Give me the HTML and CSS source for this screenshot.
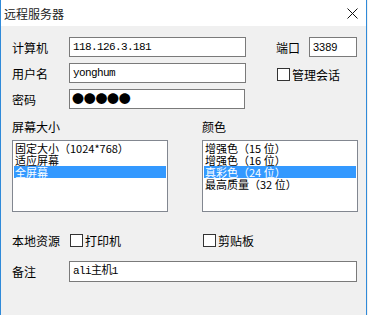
FILE: index.html
```html
<!doctype html>
<html lang="zh-CN">
  <head>
    <meta charset="UTF-8" />
    <title>远程服务器</title>
    <link rel="stylesheet" href="styles.css">
  </head>
  <body>
    <div class="window">
      <div class="titlebar">
        <span class="title">远程服务器</span>
        <svg class="close" width="11" height="11" viewBox="0 0 11 11">
          <path d="M0.5 0.5 L10.5 10.5 M10.5 0.5 L0.5 10.5" stroke="#111" stroke-width="1" fill="none" />
        </svg>
      </div>

      <div class="content">
        <!-- 连接信息 -->
        <div class="row">
          <label class="label">计算机</label>
          <div class="input mono wide">118.126.3.181</div>
          <label class="label short">端口</label>
          <div class="input port">3389</div>
        </div>
        <div class="row">
          <label class="label">用户名</label>
          <div class="input mono wide">yonghum</div>
          <span class="check side"><span class="box"></span>管理会话</span>
        </div>
        <div class="row">
          <label class="label">密码</label>
          <div class="input wide dots">●●●●●</div>
        </div>

        <!-- 屏幕与颜色 -->
        <div class="lists">
          <div class="list-group">
            <div class="list-title">屏幕大小</div>
            <ul class="listbox">
              <li>固定大小（1024*768）</li>
              <li>适应屏幕</li>
              <li class="selected">全屏幕</li>
            </ul>
          </div>
          <div class="list-group">
            <div class="list-title">颜色</div>
            <ul class="listbox">
              <li>增强色（15 位）</li>
              <li>增强色（16 位）</li>
              <li class="selected">真彩色（24 位）</li>
              <li>最高质量（32 位）</li>
            </ul>
          </div>
        </div>

        <!-- 本地资源 -->
        <div class="row resources">
          <label class="label res">本地资源</label>
          <span class="check printer"><span class="box"></span>打印机</span>
          <span class="check"><span class="box"></span>剪贴板</span>
        </div>
        <div class="row">
          <label class="label">备注</label>
          <div class="input mono note">ali主机1</div>
        </div>
      </div>
    </div>
  </body>
</html>
```

FILE: styles.css
```css
body {
  margin: 0;
  background: #f0f0f0;
  font-family: "Noto Sans CJK SC", "Noto Sans", sans-serif;
  font-size: 12px;
  color: #000;
}
.window {
  width: 365px;
  height: 315px;
  border-left: 1px solid #2f8ad9;
  border-right: 1px solid #2f8ad9;
  background: #f0f0f0;
  overflow: hidden;
}
.titlebar {
  height: 26px;
  background: #fff;
  display: flex;
  align-items: center;
  justify-content: space-between;
  padding: 0 8px 0 3px;
}
.title {
  font-size: 12px;
  color: #222;
}
.close {
  margin-top: 1px;
}
.content {
  padding: 11px 0 0 11px;
}
.row {
  display: flex;
  align-items: center;
  height: 20px;
  margin-bottom: 6px;
}
.label {
  width: 57px;
  flex: none;
}
.label.short {
  width: 33px;
  margin-left: 30px;
}
.input {
  height: 18px;
  line-height: 18px;
  border: 1px solid #7a7a7a;
  background: #fff;
  padding: 0 3px;
  box-sizing: content-box;
  white-space: nowrap;
  overflow: hidden;
  flex: none;
}
.mono {
  font-family: "Liberation Mono", "Noto Sans CJK SC", monospace;
  font-size: 11px;
  letter-spacing: -0.6px;
}
.wide {
  width: 169px;
}
.port {
  width: 40px;
  font-family: "Liberation Sans", sans-serif;
  font-size: 11px;
}
.dots {
  font-size: 12px;
  letter-spacing: -0.3px;
  padding-left: 2px;
}
.check {
  display: flex;
  align-items: center;
  white-space: nowrap;
}
.check.side {
  margin-left: 31px;
  margin-top: 2px;
}
.box {
  width: 11px;
  height: 11px;
  border: 1px solid #333;
  background: #fff;
  margin-right: 2px;
}
.lists {
  display: flex;
  margin-top: 11px;
}
.list-group {
  flex: none;
  width: 190px;
}
.list-group + .list-group {
  width: 160px;
}
.list-title {
  line-height: 14px;
  margin-bottom: 6px;
}
.listbox {
  list-style: none;
  margin: 0;
  padding: 1px;
  width: 152px;
  height: 68px;
  border: 1px solid #828790;
  background: #fff;
}
.listbox li {
  height: 12px;
  line-height: 12px;
  font-size: 11px;
  padding-left: 1px;
  white-space: nowrap;
}
.listbox li.selected {
  background: #3399ff;
  color: #fff;
}
.resources {
  margin-top: 18px;
  margin-bottom: 11px;
}
.label.res {
  width: 58px;
}
.check.printer {
  width: 133px;
}
.note {
  width: 280px;
  height: 19px;
  line-height: 19px;
}
```
